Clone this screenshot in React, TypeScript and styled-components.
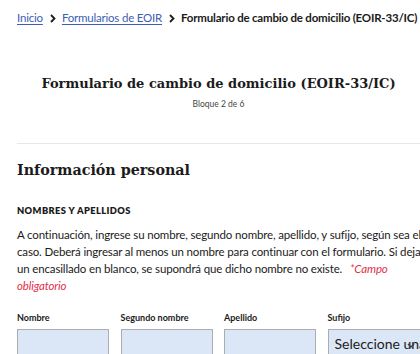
import styled, {createGlobalStyle} from "styled-components";

const GlobalStyle = createGlobalStyle`
    html, body {
        margin: 0;
        padding: 0;
        background: #ffffff;
        overflow: hidden;
    }
    body {
        font-family: Lato, "Liberation Sans", sans-serif;
        color: #1b1b1b;
    }
`

const PageStyle = styled.div`
    width: 420px;
    height: 354px;
    overflow: hidden;
    padding-left: 17px;
    box-sizing: border-box;
`

const BreadcrumbStyle = styled.nav`
    display: flex;
    align-items: center;
    white-space: nowrap;
    padding-top: 9px;
    font-size: 11.5px;
    letter-spacing: -0.2px;
    line-height: 18px;
`

const CrumbLinkStyle = styled.a`
    color: #3a5eb5;
    text-decoration: underline;
    text-underline-offset: 2px;
    text-decoration-thickness: 1px;
`

const CrumbCurrentStyle = styled.span`
    font-weight: 700;
    color: #1b1b1b;
`

const ChevronStyle = styled.span`
    display: inline-flex;
    margin: 0 6px 0 7px;
    color: #1b1b1b;
`

const HeaderStyle = styled.header`
    display: flex;
    flex-direction: column;
    align-items: center;
`

const TitleStyle = styled.h1`
    margin: 45px 0 0;
    font-family: "DejaVu Serif", "Liberation Serif", serif;
    font-size: 13px;
    line-height: 24px;
    font-weight: 700;
    white-space: nowrap;
`

const StepStyle = styled.p`
    margin: 1px 0 0;
    font-size: 8.5px;
    line-height: 14px;
    color: #454545;
`

const DividerStyle = styled.hr`
    margin: 32px 0 0;
    border: none;
    border-top: 1px solid #e8e8e8;
`

const SectionTitleStyle = styled.h2`
    margin: 13px 0 0;
    font-family: "DejaVu Serif", "Liberation Serif", serif;
    font-size: 14.3px;
    line-height: 26px;
    font-weight: 700;
`

const SubTitleStyle = styled.h3`
    margin: 20px 0 0;
    font-size: 9.3px;
    line-height: 16px;
    font-weight: 800;
    letter-spacing: 0.4px;
`

const ParagraphStyle = styled.p`
    margin: 6.5px 0 0;
    font-size: 11.5px;
    letter-spacing: -0.15px;
    line-height: 17px;
    width: 404px;
`

const RequiredStyle = styled.em`
    color: #e0314b;
    margin-left: 5px;
`

const FieldRowStyle = styled.div`
    display: grid;
    grid-template-columns: repeat(4, 92px);
    column-gap: 11.5px;
    margin-top: 17.5px;
`

const FieldStyle = styled.div`
    display: flex;
    flex-direction: column;
    gap: 4px;
`

const LabelStyle = styled.label`
    font-size: 9px;
    line-height: 14px;
    font-weight: 700;
`

const InputStyle = styled.input`
    box-sizing: border-box;
    width: 92px;
    height: 40px;
    background: #dbe6f6;
    border: 1px solid #a9aeb1;
    margin: 0;
`

const SelectStyle = styled.div`
    box-sizing: border-box;
    position: relative;
    width: 94px;
    height: 40px;
    background: #dbe6f6;
    border: 1px solid #a9aeb1;
    font-size: 14px;
    line-height: 22px;
    padding: 3px 0 0 6px;
    white-space: nowrap;
    overflow: hidden;
    color: #1b1b1b;
`

const SelectArrowStyle = styled.svg`
    position: absolute;
    right: 6px;
    top: 9px;
`

export default function App() {
    return (
        <>
            <GlobalStyle/>
            <PageStyle>
                <BreadcrumbStyle>
                    <CrumbLinkStyle>Inicio</CrumbLinkStyle>
                    <ChevronStyle>
                        <svg width="6" height="9" viewBox="0 0 6 9"><path d="M1 1l3.5 3.5L1 8" fill="none" stroke="#1b1b1b" strokeWidth="1.8"/></svg>
                    </ChevronStyle>
                    <CrumbLinkStyle>Formularios de EOIR</CrumbLinkStyle>
                    <ChevronStyle>
                        <svg width="6" height="9" viewBox="0 0 6 9"><path d="M1 1l3.5 3.5L1 8" fill="none" stroke="#1b1b1b" strokeWidth="1.8"/></svg>
                    </ChevronStyle>
                    <CrumbCurrentStyle>Formulario de cambio de domicilio (EOIR-33/IC)</CrumbCurrentStyle>
                </BreadcrumbStyle>
                <HeaderStyle>
                    <TitleStyle>Formulario de cambio de domicilio (EOIR-33/IC)</TitleStyle>
                    <StepStyle>Bloque 2 de 6</StepStyle>
                </HeaderStyle>
                <DividerStyle/>
                <SectionTitleStyle>Información personal</SectionTitleStyle>
                <SubTitleStyle>NOMBRES Y APELLIDOS</SubTitleStyle>
                <ParagraphStyle>
                    A continuación, ingrese su nombre, segundo nombre, apellido, y sufijo, según sea el caso. Deberá
                    ingresar al menos un nombre para continuar con el formulario. Si deja un encasillado en blanco, se
                    supondrá que dicho nombre no existe. <RequiredStyle>*Campo obligatorio</RequiredStyle>
                </ParagraphStyle>
                <FieldRowStyle>
                    <FieldStyle>
                        <LabelStyle>Nombre</LabelStyle>
                        <InputStyle/>
                    </FieldStyle>
                    <FieldStyle>
                        <LabelStyle>Segundo nombre</LabelStyle>
                        <InputStyle/>
                    </FieldStyle>
                    <FieldStyle>
                        <LabelStyle>Apellido</LabelStyle>
                        <InputStyle/>
                    </FieldStyle>
                    <FieldStyle>
                        <LabelStyle>Sufijo</LabelStyle>
                        <SelectStyle>
                            Seleccione una
                            <SelectArrowStyle width="8" height="10" viewBox="0 0 8 10">
                                <path d="M1 5l3 3 3-3" fill="none" stroke="#3d3d3d" strokeWidth="1.3"/>
                            </SelectArrowStyle>
                        </SelectStyle>
                    </FieldStyle>
                </FieldRowStyle>
            </PageStyle>
        </>
    );
}
